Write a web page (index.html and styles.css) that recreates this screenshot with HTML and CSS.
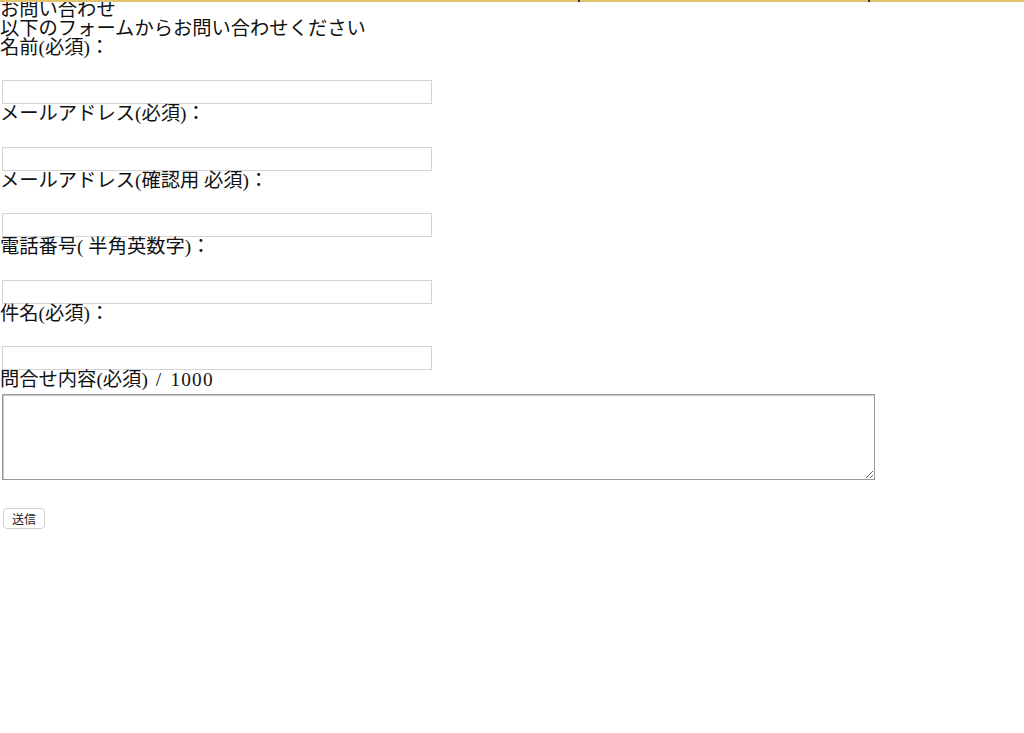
FILE: index.html
```html
<!DOCTYPE html>
<html lang="ja">
<head>
<meta charset="utf-8">
<title>お問い合わせ</title>
<link rel="stylesheet" href="styles.css">
</head>
<body>
<div class="topbar"><span class="tick tick-a"></span><span class="tick tick-b"></span></div>
<h1 class="title">お問い合わせ</h1>
<p class="lead">以下のフォームからお問い合わせください</p>
<form class="form">
  <div class="field"><label class="label">名前(必須)：</label><input class="text" type="text"></div>
  <div class="field"><label class="label">メールアドレス(必須)：</label><input class="text" type="text"></div>
  <div class="field"><label class="label">メールアドレス(確認用 必須)：</label><input class="text" type="text"></div>
  <div class="field"><label class="label">電話番号( 半角英数字)：</label><input class="text" type="text"></div>
  <div class="field"><label class="label">件名(必須)：</label><input class="text" type="text"></div>
  <div class="field"><label class="label">問合せ内容(必須)<span class="count"> / 1000</span></label><textarea class="area"></textarea></div>
  <button class="submit" type="button">送信</button>
</form>
</body>
</html>
```
FILE: styles.css
```css
html, body {
  margin: 0;
  padding: 0;
  background: #fff;
}
body {
  font-family: "Liberation Serif", "Noto Sans CJK JP", serif;
  font-size: 19.3px;
  line-height: 19px;
  color: #111;
}
.topbar {
  height: 2px;
  background: #e3c36b;
  position: relative;
}
.tick {
  position: absolute;
  top: 0;
  width: 2px;
  height: 2px;
  background: #333;
}
.tick-a { left: 578px; }
.tick-b { left: 868px; }
.title {
  margin: -2.5px 0 0 0;
  font-size: 19.3px;
  font-weight: normal;
  line-height: 19px;
}
.lead {
  margin: 0;
}
.form {
  margin: 0;
}
.field {
  display: flex;
  flex-direction: column;
  align-items: flex-start;
}
.label {
  display: block;
  height: 19.5px;
}
.count {
  letter-spacing: 1.2px;
  word-spacing: 2px;
}
.text {
  margin: 23px 0 0 2px;
  width: 430px;
  height: 24px;
  box-sizing: border-box;
  border: 1px solid #d4d4d4;
  padding: 2px 4px;
  font-size: 13px;
  background: #fff;
}
.area {
  margin: 4px 0 0 2px;
  width: 873px;
  height: 86px;
  box-sizing: border-box;
  border: 1px solid #9a9a9a;
  box-shadow: inset 1px 1px 0 #c8c8c8;
  resize: both;
  font-size: 13px;
}
.submit {
  display: block;
  margin: 28px 0 0 3px;
  width: 42px;
  height: 21px;
  padding: 0;
  border: 1px solid #cfcfcf;
  border-radius: 4px;
  background: #fff;
  font-family: "Noto Sans CJK JP", sans-serif;
  font-size: 12px;
  line-height: 19px;
  color: #222;
}
```
